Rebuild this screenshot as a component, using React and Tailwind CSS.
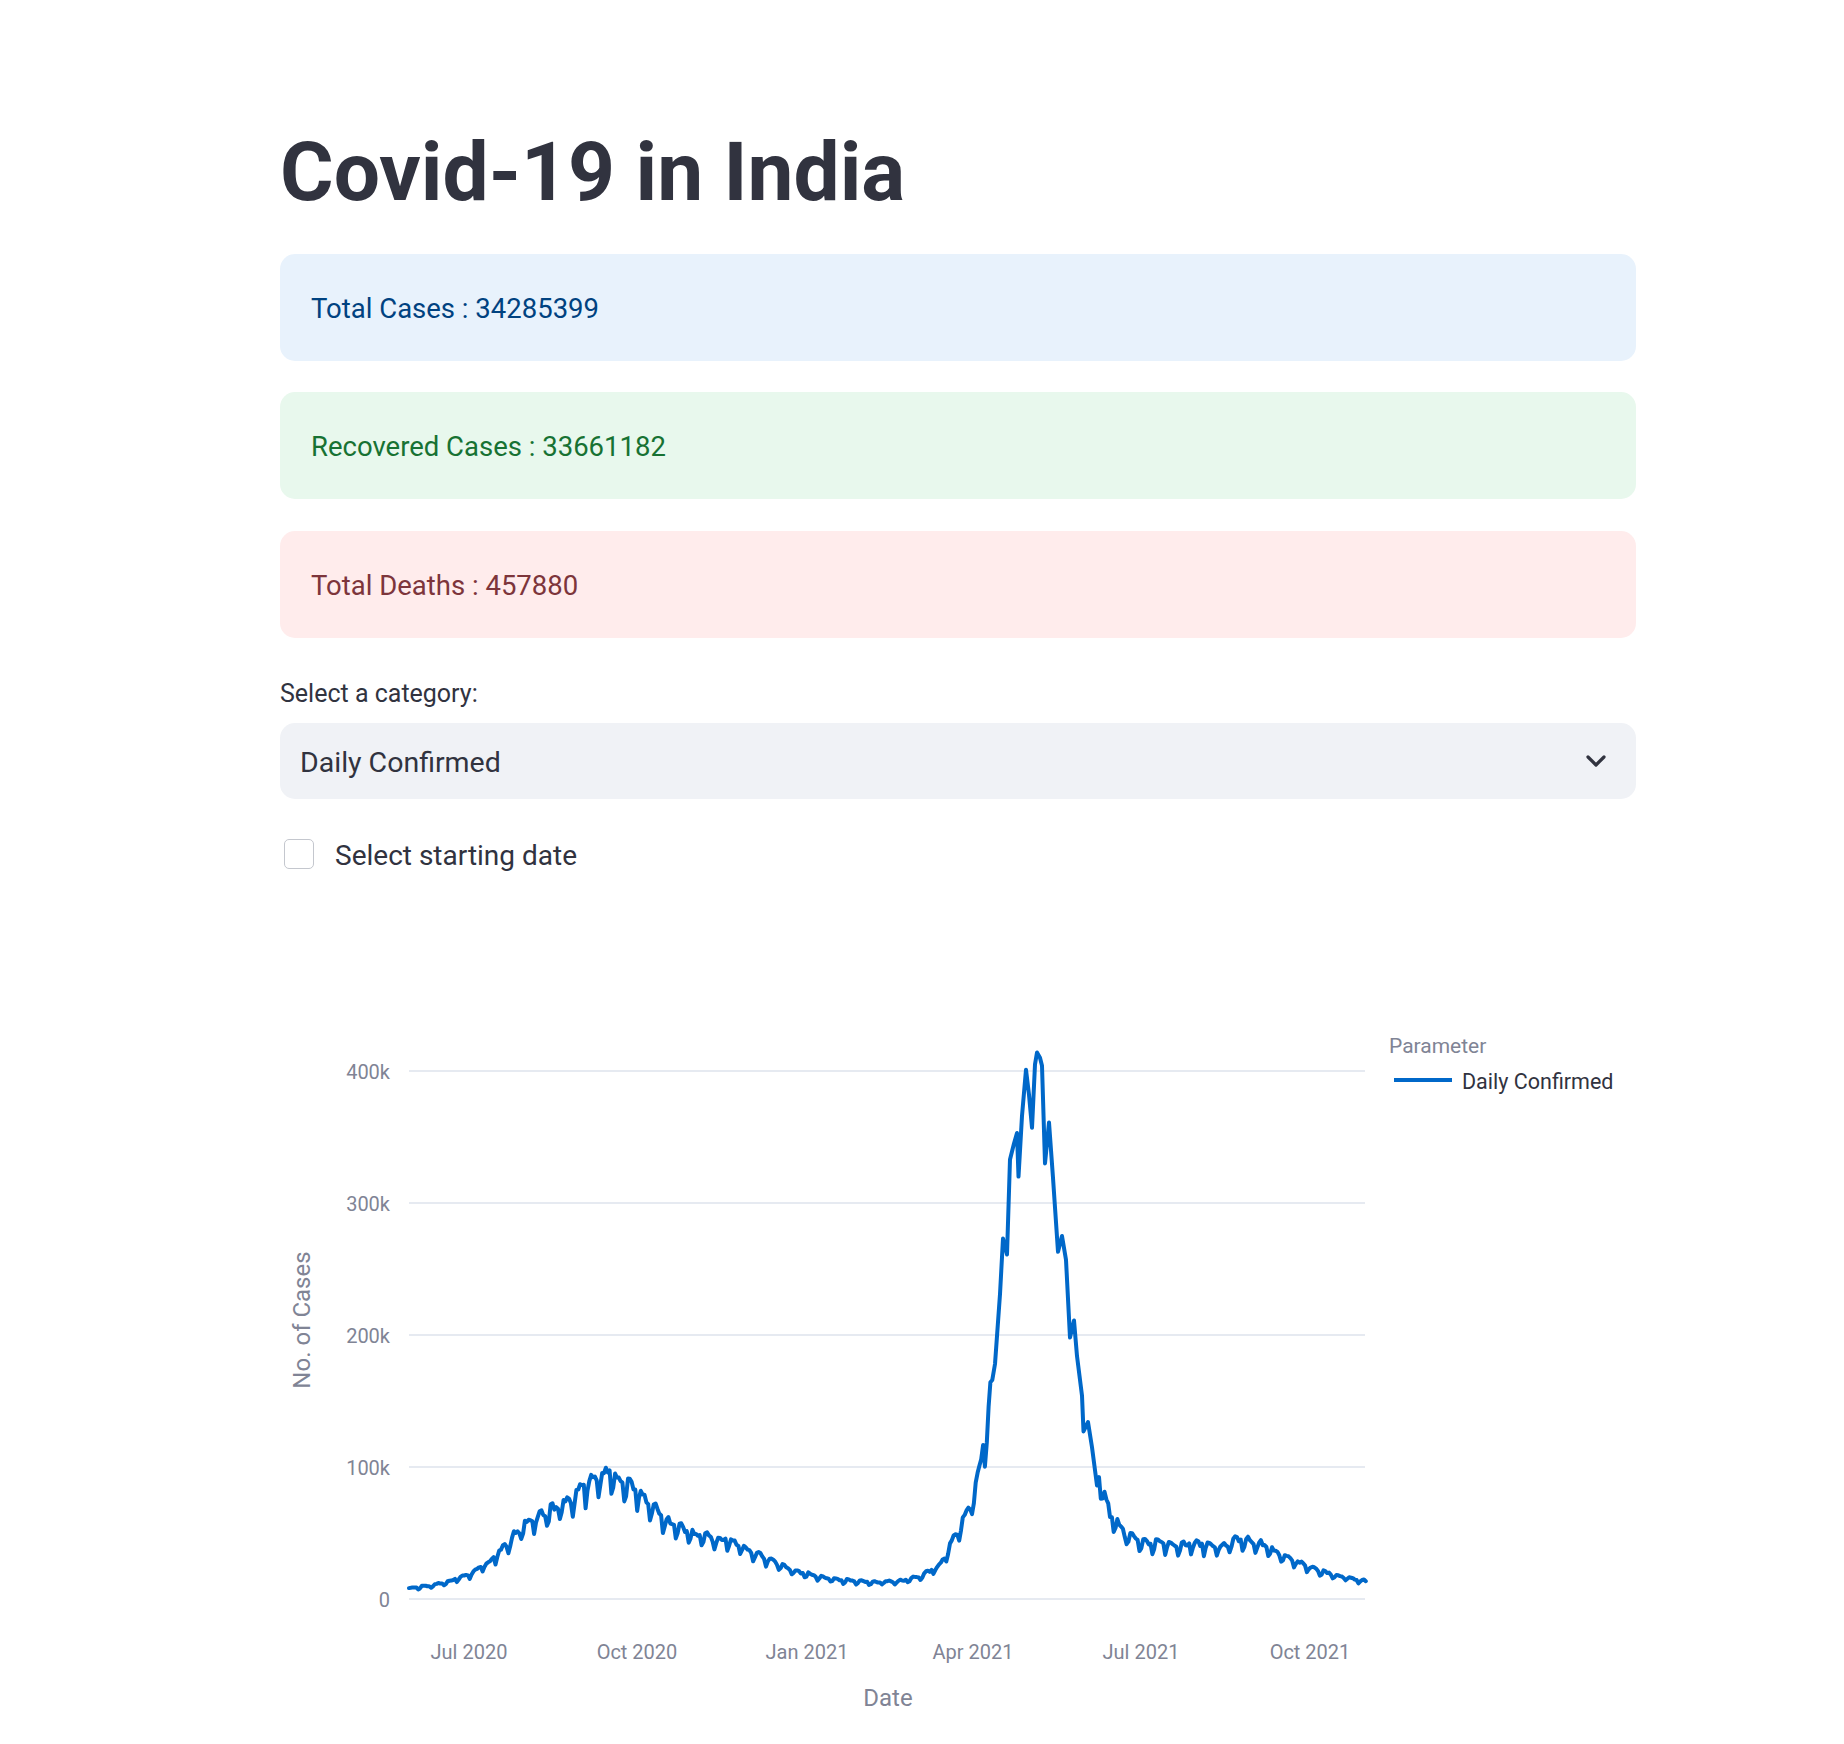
import React from 'react';

// rough trace of the daily confirmed curve: [page x, value in thousands]
const anchors = [
  [409, 8], [430, 10], [450, 13.5], [470, 19], [490, 28], [505, 40], [520, 52],
  [537, 62], [555, 68], [573, 76], [590, 89], [608, 96], [620, 89], [633, 84],
  [647, 75], [660, 64], [673, 56], [693, 49], [710, 46], [730, 44], [750, 37],
  [773, 28], [800, 20], [833, 15], [870, 12.5], [900, 13.5], [920, 17], [940, 25],
  [953, 44], [965, 62], [975, 80], [985, 125], [992, 160], [1100, 92], [1110, 64],
  [1125, 49], [1140, 43], [1170, 41], [1200, 41], [1220, 39], [1240, 45],
  [1255, 43], [1280, 34], [1300, 27], [1320, 21], [1345, 16.5], [1366, 13.5],
];

// the April-May 2021 peak, traced point by point
const peak = [
  [995, 178], [1000, 231], [1003, 273], [1007, 261], [1010, 333], [1014, 345],
  [1017, 353], [1018.5, 320], [1022, 366], [1026, 401], [1029, 382], [1032, 357],
  [1035, 405], [1037, 414], [1040, 410], [1042, 404], [1045, 330], [1049, 361],
  [1053, 319], [1058, 263], [1062, 275], [1066, 257], [1070, 198], [1074, 211],
  [1077, 184], [1082, 154], [1083.5, 127], [1088, 134], [1092, 115], [1097, 86],
];

const weekly = [1.04, 1.05, 1.03, 1.01, 0.99, 0.83, 0.92];

function interp(x) {
  for (let i = 0; i < anchors.length - 1; i++) {
    const [x0, v0] = anchors[i];
    const [x1, v1] = anchors[i + 1];
    if (x >= x0 && x <= x1) return v0 + ((x - x0) / (x1 - x0)) * (v1 - v0);
  }
  return anchors[anchors.length - 1][1];
}

function rand(d) {
  const s = Math.sin(d * 12.9898 + 4.1) * 43758.5453;
  return s - Math.floor(s);
}

const toPt = (x, v) => `${(x - 280).toFixed(1)},${(639 - v * 1.32).toFixed(1)}`;

const points = [];
let peakDone = false;
for (let d = 0; d <= 520; d++) {
  const x = 409 + d * 1.84;
  if (x > 993 && x < 1099) {
    if (!peakDone) {
      peak.forEach(([px, pv]) => points.push(toPt(px, pv)));
      peakDone = true;
    }
    continue;
  }
  const v = interp(x) * weekly[d % 7] * (1 + (rand(d) - 0.5) * 0.08);
  points.push(toPt(x, v));
}

const grid = [
  { y: 111, label: '400k' },
  { y: 243, label: '300k' },
  { y: 375, label: '200k' },
  { y: 507, label: '100k' },
  { y: 639, label: '0' },
];

const xTicks = [
  { x: 189, label: 'Jul 2020' },
  { x: 357, label: 'Oct 2020' },
  { x: 527, label: 'Jan 2021' },
  { x: 693, label: 'Apr 2021' },
  { x: 861, label: 'Jul 2021' },
  { x: 1030, label: 'Oct 2021' },
];

const Chart = () => (
  <svg width="1356" height="784" className="block mt-[90px]">
    {grid.map((g) => (
      <g key={g.label}>
        <line x1="129" x2="1085" y1={g.y} y2={g.y} stroke="#e6eaf1" strokeWidth="2" />
        <text x="110" y={g.y + 8} textAnchor="end" fontSize="20" fill="#808495">
          {g.label}
        </text>
      </g>
    ))}
    {xTicks.map((t) => (
      <text key={t.label} x={t.x} y="699" textAnchor="middle" fontSize="20" fill="#808495">
        {t.label}
      </text>
    ))}
    <text x="608" y="746" textAnchor="middle" fontSize="24" fill="#808495">
      Date
    </text>
    <text transform="translate(30 360) rotate(-90)" textAnchor="middle" fontSize="24" fill="#808495">
      No. of Cases
    </text>
    <polyline
      points={points.join(' ')}
      fill="none"
      stroke="#0068c9"
      strokeWidth="4"
      strokeLinejoin="round"
      strokeLinecap="round"
    />
    <text x="1109" y="93" fontSize="21" fill="#808495">
      Parameter
    </text>
    <line x1="1114" x2="1172" y1="120" y2="120" stroke="#0068c9" strokeWidth="4" />
    <text x="1182" y="129" fontSize="21.5" fill="#31333f">
      Daily Confirmed
    </text>
  </svg>
);

const Alert = ({ bg, color, children, className }) => (
  <div className={`flex h-[107px] items-center rounded-[15px] pl-[31px] ${bg} ${className}`}>
    <p className={`pt-[3px] text-[27.5px] leading-[32px] ${color}`}>{children}</p>
  </div>
);

export default function App() {
  return (
    <div className="min-h-screen bg-white font-['Roboto',sans-serif] text-[#31333f]">
      <div className="ml-[280px] w-[1356px] pt-[124px]">
        <h1 className="text-[82px] font-bold leading-[96px] text-[#31333f]">Covid-19 in India</h1>

        <div className="mt-[34px] flex flex-col">
          <Alert bg="bg-[#e8f2fc]" color="text-[#004280]">Total Cases : 34285399</Alert>
          <Alert bg="bg-[#e8f8ed]" color="text-[#177233]" className="mt-[31px]">
            Recovered Cases : 33661182
          </Alert>
          <Alert bg="bg-[#ffecec]" color="text-[#7d353b]" className="mt-[32px]">
            Total Deaths : 457880
          </Alert>
        </div>

        <label className="mt-[41px] block text-[25px] leading-[30px]">Select a category:</label>
        <div className="mt-[14px] flex h-[76px] items-center justify-between rounded-[15px] bg-[#f0f2f6] pl-[20px] pr-[30px]">
          <span className="pt-[2px] text-[28.5px] leading-[33px]">Daily Confirmed</span>
          <svg width="20" height="12" viewBox="0 0 20 12">
            <path d="M2 2 L10 10 L18 2" fill="none" stroke="#31333f" strokeWidth="3.2" strokeLinecap="round" strokeLinejoin="round" />
          </svg>
        </div>

        <div className="mt-[39px] flex h-[32px] items-center gap-[21px] pl-[4px]">
          <span className="h-[30px] w-[30px] rounded-[5px] border-[1.5px] border-[#c4c7ce] bg-white" />
          <span className="pt-[2px] text-[28px] leading-[33px]">Select starting date</span>
        </div>

        <Chart />
      </div>
    </div>
  );
}
